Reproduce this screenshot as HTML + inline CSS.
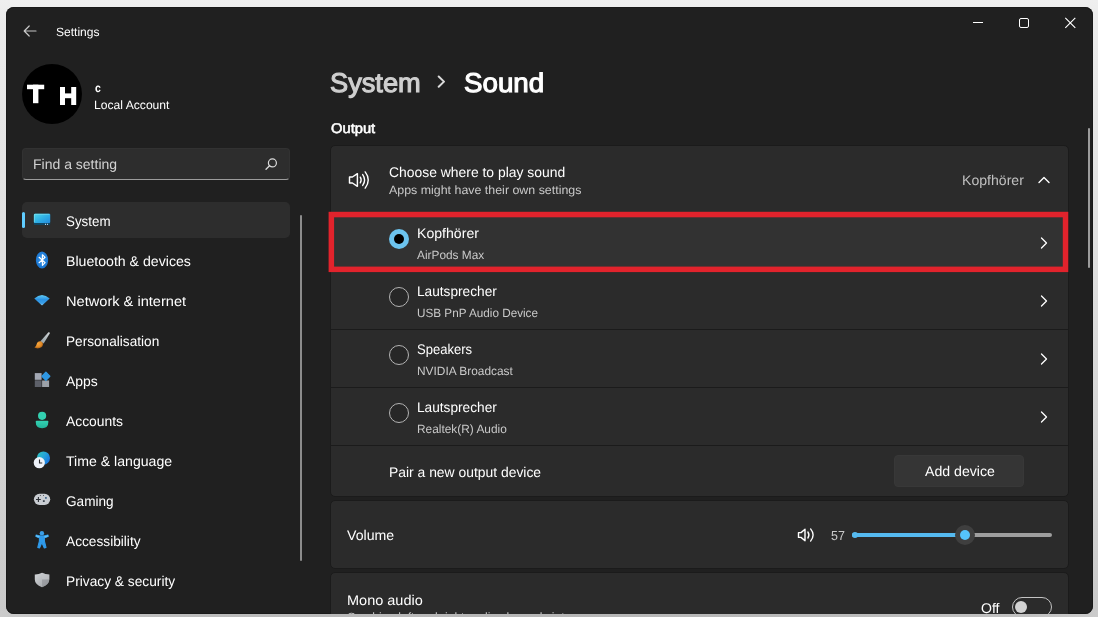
<!DOCTYPE html>
<html>
<head>
<meta charset="utf-8">
<title>Settings</title>
<style>
html,body{margin:0;padding:0;}
body{width:1098px;height:617px;overflow:hidden;background:linear-gradient(180deg,#efefef 0%,#ebebeb 4%,#dddddd 47%,#d3d3d3 75%,#c9c9c9 100%);font-family:"Liberation Sans",sans-serif;color:#fff;position:relative;}
.win{will-change:transform;position:absolute;left:6px;top:7px;width:1087px;height:607px;background:#202020;border-radius:8px;overflow:hidden;box-shadow:inset 0 0 0 1px #191919;}
.t{position:absolute;white-space:nowrap;line-height:1;transform-origin:0 50%;text-rendering:geometricPrecision;}
.abs{position:absolute;}
.nav .t{font-size:14px;}
.card{position:absolute;background:#2b2b2b;border:1px solid #1b1b1b;border-radius:5px;box-sizing:border-box;}
.sub{color:#c9c9c9;}
.sep{position:absolute;left:325px;width:737px;height:1px;background:#1b1b1b;}
.radio{position:absolute;left:383px;width:20px;height:20px;border-radius:50%;border:1px solid #b4b4b4;box-sizing:border-box;background:#272727;}
</style>
</head>
<body>
<div style="position:absolute;left:0;top:611px;width:1098px;height:6px;background:linear-gradient(90deg,#cbcbcb 0%,#c0c0c0 6%,#b9b9b9 30%,#b6b6b6 50%,#b9b9b9 70%,#c0c0c0 94%,#cbcbcb 100%);"></div>
<div class="win" id="win">
  <!-- title bar -->
  <svg class="abs" style="left:17px;top:18px" width="14" height="12" viewBox="0 0 14 12"><path d="M6.2 1 L1.2 6 L6.2 11 M1.4 6 H13" fill="none" stroke="#c4c4c4" stroke-width="1.2" stroke-linecap="round" stroke-linejoin="round"/></svg>
  <div class="t" id="t_settings" style="left:49.64px;top:19px;font-size:12px;transform:scaleX(1.003);">Settings</div>

  <!-- window controls -->
  <svg class="abs" style="left:966px;top:10px" width="110" height="14" viewBox="0 0 110 14">
    <path d="M1 5.5 H11" stroke="#fff" stroke-width="1"/>
    <rect x="47.5" y="1.5" width="9" height="9" rx="1.5" fill="none" stroke="#fff" stroke-width="1"/>
    <path d="M93.3 0.8 L103.3 10.8 M103.3 0.8 L93.3 10.8" stroke="#fff" stroke-width="1.15"/>
  </svg>

  <!-- avatar -->
  <div class="abs" style="left:16px;top:57px;width:60px;height:60px;border-radius:50%;background:#000;"></div>
  <svg class="abs" style="left:16px;top:57px" width="60" height="60" viewBox="22 64 60 60">
    <rect x="27" y="84.7" width="17.2" height="4.5" fill="#fff"/>
    <rect x="33" y="84.7" width="5.4" height="18.5" fill="#fff"/>
    <rect x="60" y="87" width="5" height="18" fill="#fff"/>
    <rect x="71.2" y="87" width="5" height="18" fill="#fff"/>
    <rect x="60" y="93.4" width="16" height="4.8" fill="#fff"/>
  </svg>
  <div class="t" id="t_c" style="left:88.80px;top:75.2px;font-size:12px;font-weight:bold;transform:scaleX(0.872);">c</div>
  <div class="t" id="t_local" style="left:87.89px;top:92px;font-size:12px;transform:scaleX(1.010);">Local Account</div>

  <!-- search -->
  <div class="abs" style="left:16px;top:141px;width:268px;height:32px;background:#2d2d2d;border-radius:4px;border:1px solid #323232;border-bottom:1px solid #9c9c9c;box-sizing:border-box;"></div>
  <div class="t" id="t_find" style="left:27.02px;top:150px;font-size:14px;color:#d2d2d2;transform:scaleX(1.000);">Find a setting</div>
  <svg class="abs" style="left:258px;top:150px" width="14" height="14" viewBox="0 0 14 14"><circle cx="8.4" cy="5.9" r="4" fill="none" stroke="#dcdcdc" stroke-width="1.2"/><path d="M5.5 8.8 L2 12.3" stroke="#dcdcdc" stroke-width="1.3" stroke-linecap="round"/></svg>

  <!-- nav -->
  <div class="abs" style="left:16px;top:195px;width:268px;height:36px;background:#2d2d2d;border-radius:5px;"></div>
  <div class="abs" style="left:16px;top:205px;width:3px;height:16px;background:#60cdff;border-radius:2px;"></div>
  <div class="nav">
    <div class="t" id="n0" style="left:59.72px;top:207px;transform:scaleX(0.954);">System</div>
    <div class="t" id="n1" style="left:59.52px;top:247px;transform:scaleX(1.009);">Bluetooth &amp; devices</div>
    <div class="t" id="n2" style="left:60.09px;top:287px;transform:scaleX(1.043);">Network &amp; internet</div>
    <div class="t" id="n3" style="left:59.93px;top:327px;transform:scaleX(0.974);">Personalisation</div>
    <div class="t" id="n4" style="left:60.49px;top:367px;transform:scaleX(0.994);">Apps</div>
    <div class="t" id="n5" style="left:59.70px;top:407px;transform:scaleX(0.990);">Accounts</div>
    <div class="t" id="n6" style="left:60.16px;top:447px;transform:scaleX(1.008);">Time &amp; language</div>
    <div class="t" id="n7" style="left:60.23px;top:487px;transform:scaleX(0.971);">Gaming</div>
    <div class="t" id="n8" style="left:59.75px;top:527px;transform:scaleX(0.978);">Accessibility</div>
    <div class="t" id="n9" style="left:60.04px;top:567px;transform:scaleX(0.981);">Privacy &amp; security</div>
  </div>
  <!-- NAVICONS_START -->
  <svg class="abs" style="left:22px;top:200px" width="36" height="400" viewBox="28 207 36 400">
    <defs>
      <linearGradient id="gmon" x1="0" y1="0" x2="1" y2="1"><stop offset="0" stop-color="#4fd6ea"/><stop offset="0.5" stop-color="#2fb0e4"/><stop offset="1" stop-color="#2389dc"/></linearGradient>
      <radialGradient id="gbt" cx="0.5" cy="0.45" r="0.6"><stop offset="0" stop-color="#3596ea"/><stop offset="1" stop-color="#1670cc"/></radialGradient>
      <linearGradient id="gwifi" x1="0" y1="0" x2="0" y2="1"><stop offset="0" stop-color="#62cdf4"/><stop offset="0.45" stop-color="#2b93e4"/><stop offset="0.8" stop-color="#3a9fe8"/><stop offset="1" stop-color="#8fd0f4"/></linearGradient>
      <linearGradient id="gbrush" x1="1" y1="0" x2="0" y2="1"><stop offset="0" stop-color="#d4d8da"/><stop offset="1" stop-color="#8f9ca0"/></linearGradient>
      <radialGradient id="gor" cx="0.4" cy="0.35" r="0.7"><stop offset="0" stop-color="#f6a63c"/><stop offset="0.6" stop-color="#e08a28"/><stop offset="1" stop-color="#9a5410"/></radialGradient>
      <linearGradient id="gacc" x1="0" y1="0" x2="0" y2="1"><stop offset="0" stop-color="#34d2b2"/><stop offset="1" stop-color="#22b49a"/></linearGradient>
      <linearGradient id="gglobe" x1="0" y1="0" x2="1" y2="0.6"><stop offset="0" stop-color="#30c8bc"/><stop offset="0.55" stop-color="#25a4d8"/><stop offset="1" stop-color="#1a78e0"/></linearGradient>
      <linearGradient id="gsh" x1="0" y1="0" x2="1" y2="1"><stop offset="0" stop-color="#d4d7da"/><stop offset="1" stop-color="#9a9da1"/></linearGradient>
    </defs>
    <!-- system -->
    <rect x="33.9" y="213.8" width="16.3" height="11.3" rx="1.2" fill="#114560"/>
    <rect x="33.9" y="213.8" width="16.3" height="9.2" rx="1" fill="url(#gmon)"/>
    <path d="M34.4 222.4 V215 Q34.4 214.3 35.1 214.3 H49.4" fill="none" stroke="#8be6f2" stroke-width="0.7" opacity="0.8"/>
    <rect x="45" y="223.8" width="1" height="1" fill="#d8ecff"/><rect x="47" y="223.8" width="1" height="1" fill="#d8ecff"/>
    <!-- bluetooth -->
    <ellipse cx="42" cy="260" rx="6.1" ry="8.6" fill="url(#gbt)"/>
    <path d="M39.1 257.3 L45.1 262.7 L42.4 265.3 V254.7 L45.1 257.3 L39.1 262.7" fill="none" stroke="#fff" stroke-width="1.15" stroke-linejoin="round" stroke-linecap="round"/>
    <!-- wifi -->
    <path d="M34.3 298.6 Q42 291.2 49.7 298.6 L42.6 305.1 Q42 305.6 41.4 305.1 Z" fill="url(#gwifi)"/>
    <!-- brush -->
    <path d="M48.4 332.3 Q49.6 331.8 49.9 333.2 L43.6 343.4 L40.2 341.4 Z" fill="url(#gbrush)"/>
    <path d="M34.4 347.6 Q36.2 346.6 36.6 344.2 Q37.4 341 40.4 341.2 Q43.2 341.8 43 344.6 Q42.4 348.4 37.6 348.4 Q35.4 348.4 34.4 347.6 Z" fill="url(#gor)"/>
    <!-- apps -->
    <rect x="34.8" y="373.1" width="6.8" height="6.7" fill="#a3a8b4"/>
    <rect x="34.8" y="380.3" width="6.8" height="6.7" fill="#5d6069"/>
    <rect x="42.1" y="380.5" width="7" height="6.5" fill="#9ca1a8"/>
    <path d="M45.9 372.1 L49.8 376.2 L45.9 380.3 L42 376.2 Z" fill="#2f97e2" stroke="#2f97e2" stroke-width="1.3" stroke-linejoin="round"/>
    <!-- accounts -->
    <circle cx="42.1" cy="415.8" r="4.1" fill="#33d0b0"/>
    <path d="M36.6 420.8 H47.6 Q48.4 420.8 48.4 421.8 Q48.4 428.2 42.1 428.2 Q35.7 428.2 35.7 421.8 Q35.7 420.8 36.6 420.8 Z" fill="url(#gacc)"/>
    <!-- time -->
    <circle cx="43.4" cy="458" r="6.6" fill="url(#gglobe)"/>
    <circle cx="39.3" cy="462.7" r="5.6" fill="#edf1f8"/>
    <path d="M39.5 459.4 V463 H42.2" fill="none" stroke="#2a2c30" stroke-width="1.1"/>
    <!-- gaming -->
    <rect x="33.9" y="493.8" width="16.3" height="11.1" rx="5.55" fill="#c9cdd2"/>
    <path d="M36 499.5 H40.8 M38.4 497.1 V501.9" stroke="#2c3036" stroke-width="1.1"/>
    <rect x="45" y="497" width="1.8" height="1.8" fill="#4a6e90"/>
    <rect x="42.9" y="500.2" width="1.8" height="1.8" fill="#3c4650"/>
    <rect x="39.9" y="495" width="0.9" height="0.9" fill="#40444a"/><rect x="43" y="495" width="0.9" height="0.9" fill="#40444a"/>
    <!-- accessibility -->
    <circle cx="41.9" cy="533.2" r="2.2" fill="#3a9fe8"/>
    <path d="M36.2 535 Q41.9 537 47.9 535 L48.3 536.3 Q46 537.4 44.4 537.6 V541.2 L46 547.4 L44.2 547.9 L41.9 542.6 L39.6 547.9 L37.8 547.4 L39.4 541.2 V537.6 Q37.8 537.4 35.8 536.3 Z" fill="#2f9aea" stroke="#2f9aea" stroke-width="1.1" stroke-linejoin="round"/>
    <path d="M36.2 535 Q38 535.8 39.6 536 L39.4 537.6 Q37.8 537.4 35.8 536.3 Z M47.9 535 Q46 535.8 44.4 536 L44.4 537.6 Q46 537.4 48.3 536.3 Z" fill="#62c2f4"/>
    <!-- privacy -->
    <path d="M42 572.8 Q45.6 574.8 49.3 574.6 V579.6 Q49.3 584.6 42 587.2 Q34.8 584.6 34.8 579.6 V574.6 Q38.4 574.8 42 572.8 Z" fill="url(#gsh)"/>
    <path d="M42 572.8 Q45.6 574.8 49.3 574.6 V579.4 H42 Z" fill="#c2c5c9" opacity="0.55"/>
    <path d="M42 579.4 H49.3 Q49.3 584.6 42 587.2 Z" fill="#8d9094" opacity="0.6"/>
  </svg>
  <!-- NAVICONS_END -->
  <div class="abs" style="left:294px;top:208px;width:2px;height:346px;background:#8c8c8c;border-radius:1px;"></div>

  <!-- heading -->
  <div class="t" id="h_system" style="-webkit-text-stroke:1.1px #cfcfcf;left:324.14px;top:62.5px;font-size:27px;color:#cfcfcf;transform:scaleX(1.008);">System</div>
  <svg class="abs" style="left:431px;top:68.4px" width="9" height="13" viewBox="0 0 9 13"><path d="M1.7 1.5 L7 6.6 L1.7 11.7" fill="none" stroke="#dadada" stroke-width="2" stroke-linecap="round" stroke-linejoin="round"/></svg>
  <div class="t" id="h_sound" style="-webkit-text-stroke:1.1px #fff;left:458.26px;top:62.5px;font-size:27px;transform:scaleX(1.027);">Sound</div>
  <div class="t" id="t_output" style="left:324.97px;top:114px;font-size:14px;-webkit-text-stroke:0.55px #fff;transform:scaleX(1.052);">Output</div>

  <!-- card 1 -->
  <div class="card" style="left:324px;top:138px;width:739px;height:352px;"></div>
  <div class="sep" style="top:205px;"></div>
  <div class="abs" style="left:325px;top:206px;width:737px;height:58px;background:#323232;"></div>
  <div class="sep" style="top:322px;"></div>
  <div class="sep" style="top:380px;"></div>
  <div class="sep" style="top:438px;"></div>

  <!-- speaker icon -->
  <svg class="abs" style="left:342px;top:164px" width="24" height="18" viewBox="0 0 24 18">
    <path d="M1.5 6 H4.4 L9.4 2.7 V15.3 L4.4 12 H1.5 Z" fill="none" stroke="#fff" stroke-width="1.45" stroke-linejoin="round"/>
    <path d="M12.3 6.2 Q14 9 12.3 11.8" fill="none" stroke="#fff" stroke-width="1.4" stroke-linecap="round"/>
    <path d="M14.7 3.6 Q18.5 9 14.7 14.4" fill="none" stroke="#fff" stroke-width="1.4" stroke-linecap="round"/>
    <path d="M17.2 0.9 Q23.3 9 17.2 17.1" fill="none" stroke="#fff" stroke-width="1.4" stroke-linecap="round"/>
  </svg>
  <div class="t" id="c_choose" style="left:383.17px;top:158px;font-size:14px;transform:scaleX(0.993);">Choose where to play sound</div>
  <div class="t sub" id="c_apps" style="left:382.56px;top:177px;font-size:12px;transform:scaleX(1.034);">Apps might have their own settings</div>
  <div class="t sub" id="c_kopf_r" style="color:#c0c0c0;left:956.05px;top:166px;font-size:14px;transform:scaleX(1.006);">Kopfhörer</div>
  <svg class="abs" style="left:1032px;top:169px" width="12" height="8" viewBox="0 0 12 8"><path d="M1 6.5 L6 1.5 L11 6.5" fill="none" stroke="#fff" stroke-width="1.4" stroke-linecap="round" stroke-linejoin="round"/></svg>

  <!-- rows -->
  <div class="abs" style="left:383px;top:222px;width:20px;height:20px;border-radius:50%;background:#6cc4ef;"></div>
  <div class="abs" style="left:387.7px;top:226.7px;width:10.6px;height:10.6px;border-radius:50%;background:#000;"></div>
  <div class="t" id="r0a" style="left:410.87px;top:219px;font-size:14px;transform:scaleX(1.007);">Kopfhörer</div>
  <div class="t sub" id="r0b" style="left:411.06px;top:241.6px;font-size:12px;transform:scaleX(0.989);">AirPods Max</div>

  <div class="radio" style="top:280px;"></div>
  <div class="t" id="r1a" style="left:411.29px;top:277px;font-size:14px;transform:scaleX(0.977);">Lautsprecher</div>
  <div class="t sub" id="r1b" style="left:410.98px;top:299.6px;font-size:12px;transform:scaleX(0.977);">USB PnP Audio Device</div>

  <div class="radio" style="top:338px;"></div>
  <div class="t" id="r2a" style="left:410.78px;top:335px;font-size:14px;transform:scaleX(0.932);">Speakers</div>
  <div class="t sub" id="r2b" style="left:411.24px;top:357.6px;font-size:12px;transform:scaleX(0.991);">NVIDIA Broadcast</div>

  <div class="radio" style="top:396px;"></div>
  <div class="t" id="r3a" style="left:411.29px;top:393px;font-size:14px;transform:scaleX(0.977);">Lautsprecher</div>
  <div class="t sub" id="r3b" style="left:411.45px;top:415.6px;font-size:12px;transform:scaleX(0.990);">Realtek(R) Audio</div>

  <svg class="abs" style="left:1034px;top:230px" width="8" height="12" viewBox="0 0 8 12"><path d="M1.5 1 L6.5 6 L1.5 11" fill="none" stroke="#fff" stroke-width="1.3" stroke-linecap="round" stroke-linejoin="round"/></svg>
  <svg class="abs" style="left:1034px;top:288px" width="8" height="12" viewBox="0 0 8 12"><path d="M1.5 1 L6.5 6 L1.5 11" fill="none" stroke="#fff" stroke-width="1.3" stroke-linecap="round" stroke-linejoin="round"/></svg>
  <svg class="abs" style="left:1034px;top:346px" width="8" height="12" viewBox="0 0 8 12"><path d="M1.5 1 L6.5 6 L1.5 11" fill="none" stroke="#fff" stroke-width="1.3" stroke-linecap="round" stroke-linejoin="round"/></svg>
  <svg class="abs" style="left:1034px;top:404px" width="8" height="12" viewBox="0 0 8 12"><path d="M1.5 1 L6.5 6 L1.5 11" fill="none" stroke="#fff" stroke-width="1.3" stroke-linecap="round" stroke-linejoin="round"/></svg>

  <!-- red highlight -->
  <svg class="abs" style="left:320px;top:200px" width="750" height="70" viewBox="320 200 750 70"><rect x="325.35" y="207.55" width="734.2" height="54.8" fill="none" stroke="#e2232c" stroke-width="5.5"/></svg>

  <div class="t" id="c_pair" style="left:383.04px;top:458px;font-size:14px;transform:scaleX(0.992);">Pair a new output device</div>
  <div class="abs" style="left:888px;top:448px;width:130px;height:32px;background:#353535;border-radius:4px;border:1px solid #383838;box-sizing:border-box;"></div>
  <div class="t" id="c_add" style="left:918.79px;top:457px;font-size:14px;transform:scaleX(1.009);">Add device</div>

  <!-- card 2 -->
  <div class="card" style="left:324px;top:493px;width:739px;height:69px;"></div>
  <div class="t" id="c_volume" style="left:341.03px;top:521px;font-size:14px;transform:scaleX(1.009);">Volume</div>
  <svg class="abs" style="left:791px;top:520px" width="20" height="16" viewBox="0 0 20 16">
    <path d="M1.5 5.6 H4 L8 2.3 V13.7 L4 10.4 H1.5 Z" fill="none" stroke="#fff" stroke-width="1.4" stroke-linejoin="round"/>
    <path d="M10.9 5 Q13 8 10.9 11" fill="none" stroke="#fff" stroke-width="1.35" stroke-linecap="round"/>
    <path d="M13.6 1.9 Q18.6 8 13.6 14.1" fill="none" stroke="#fff" stroke-width="1.35" stroke-linecap="round"/>
  </svg>
  <div class="t sub" id="c_57" style="left:824.77px;top:521.5px;font-size:13px;transform:scaleX(0.958);">57</div>
  <div class="abs" style="left:846px;top:526px;width:200px;height:4px;border-radius:2px;background:#9e9e9e;"></div>
  <div class="abs" style="left:846px;top:526px;width:112px;height:4px;border-radius:2px;background:#55baf0;"></div>
  <div class="abs" style="left:845.6px;top:525px;width:6px;height:6px;border-radius:3px;background:#55baf0;"></div>
  <div class="abs" style="left:949px;top:518px;width:20px;height:20px;border-radius:50%;background:#3f3f3f;"></div>
  <div class="abs" style="left:953.8px;top:522.8px;width:10.4px;height:10.4px;border-radius:50%;background:#55c4fb;"></div>

  <!-- card 3 -->
  <div class="card" style="left:324px;top:565px;width:739px;height:67px;"></div>
  <div class="t" id="c_mono" style="left:340.53px;top:586px;font-size:14px;transform:scaleX(1.035);">Mono audio</div>
  <div class="t sub" id="c_mono2" style="left:341px;top:603.7px;font-size:12px;">Combine left and right audio channels into one</div>
  <div class="t" id="c_off" style="left:974.80px;top:594px;font-size:14px;transform:scaleX(1.004);">Off</div>
  <div class="abs" style="left:1006px;top:590px;width:40px;height:20px;border-radius:10px;border:1px solid #c4c4c4;box-sizing:border-box;"></div>
  <div class="abs" style="left:1009px;top:594px;width:12px;height:12px;border-radius:50%;background:#d2d2d2;"></div>

  <!-- main scrollbar -->
  <div class="abs" style="left:1082px;top:121px;width:2px;height:140px;background:#9c9c9c;border-radius:1px;"></div>
</div>
</body>
</html>
